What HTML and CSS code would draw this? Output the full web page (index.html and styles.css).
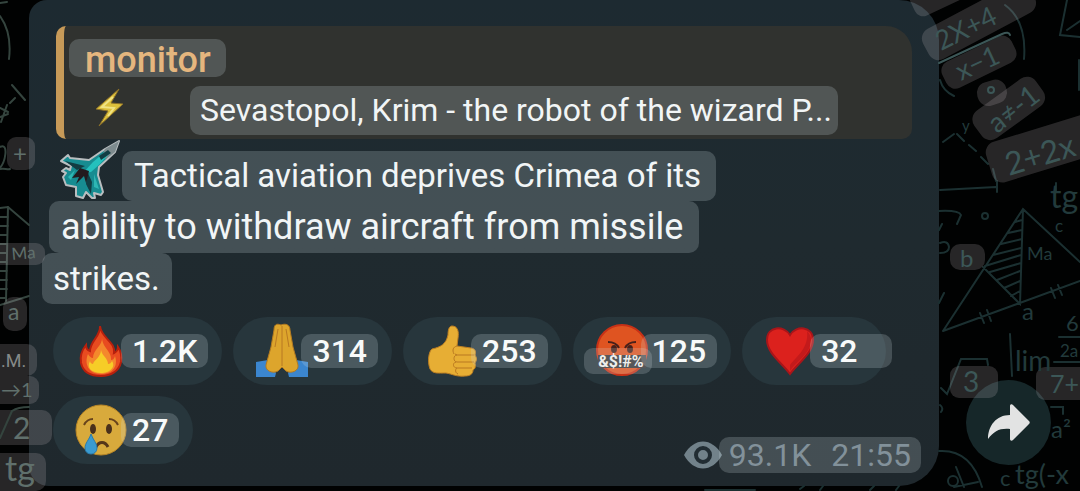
FILE: index.html
```html
<!DOCTYPE html>
<html lang="en">
<head>
<meta charset="utf-8">
<title>monitor</title>
<link rel="stylesheet" href="styles.css">
</head>
<body>
<main class="chat">
  <article class="message">
    <blockquote class="quote">
      <div class="quote-author"><span class="chip">monitor</span></div>
      <div class="quote-line">
        <svg class="bolt" viewBox="0 0 36 42" aria-hidden="true"><path d="M27 3 4 23l12 2L7 40l24-22-12-1z" fill="#dcc03c" stroke="#8a6f2a" stroke-width="1" stroke-linejoin="round"/><path d="M21 11 10 21l12 1-6 8" fill="none" stroke="#f0e384" stroke-width="2"/></svg>
        <span class="chip quote-text">Sevastopol, Krim - the robot of the wizard P...</span>
      </div>
    </blockquote>
    <div class="body">
      <div class="line line-first">
        <svg class="jet" viewBox="0 0 64 62" aria-hidden="true">
          <path d="M61 2 57 13 41 28 40 36 45 53 43 56 36 54 37 59 34 59 28 53 25 59 18 57 18 48 8 46 5 38 8 34 4 32 8 29 12 31 13 27 3 22 10 16 12 19 31 21 47 10z" fill="#178c91" stroke="#b9bec0" stroke-width="2" stroke-linejoin="round"/>
          <path d="M61 2 57 13 48 20 44 17 47 10z" fill="#7e8b8e"/>
          <path d="M47 13 35 23 25 34 33 33 42 25 52 14z" fill="#24c0bd"/>
          <path d="M50 11 41 17 43 21 53 14zM7 22l20 5-8 4zM29 32l5 11-1 12-5-10z" fill="#123d43"/>
          <path d="M22 29 14 39l7-1-3 7 8-8 2 7 3-12z" fill="#231a1e"/>
          <path d="M36 35l5 15-5-2zM10 38l7-7-4 10z" fill="#2eb7b4"/>
        </svg>
        <span class="chip">Tactical aviation deprives Crimea of its</span>
      </div>
      <div class="line"><span class="chip line-second">ability to withdraw aircraft from missile</span></div>
      <div class="line"><span class="chip line-third">strikes.</span></div>
    </div>
    <div class="reactions">
      <button class="reaction" type="button" aria-label="Fire 1.2K">
        <svg class="emoji" viewBox="0 0 52 52" aria-hidden="true"><path d="M24 1c1 10-10 15-10 25-3-1-4-3-4-6-4 5-6 12-5 18 2 9 10 13 20 13s18-5 20-14c1-6-1-12-3-15 0 3-2 5-4 6C40 17 25 13 24 1z" fill="#e84b20" stroke="#b7200d" stroke-width="2"/><path d="M26 12c1 9-9 12-9 21-2 0-4-2-5-4-4 9 0 20 13 20s17-9 14-18c-1 3-2 4-4 4 1-9-9-12-9-23z" fill="#f4882c"/><path d="M25 25c0 7-7 10-8 14-1 0-3-1-3-3-4 7 2 12 11 12s15-6 11-12c-1 2-2 3-4 3 0-6-6-8-7-14z" fill="#f6cd27"/></svg>
        <span class="chip count">1.2K</span></button>
      <button class="reaction" type="button" aria-label="Folded hands 314">
        <svg class="emoji" viewBox="0 0 52 52" aria-hidden="true"><path d="M0 37 12 35l8 13-1 4H0zM52 37 40 35l-8 13 1 4h19z" fill="#3b86cf"/><path d="M25 0c-5-2-7 0-7 5l-3 17-5 18c-1 6 7 9 12 6l4-4 4 4c5 3 13 0 12-6l-5-18-3-17c0-5-4-7-9-5z" fill="#dda52c" stroke="#b37a20" stroke-width="1"/><path d="M26 1v40M22 4l-3 18M30 4l3 18" fill="none" stroke="#b87922" stroke-width="1"/></svg>
        <span class="chip count">314</span></button>
      <button class="reaction" type="button" aria-label="Thumbs up 253">
        <svg class="emoji" viewBox="0 0 52 52" aria-hidden="true"><path d="M22 10c0-5 1-9 4-9 6 0 7 6 6 12l-1 8 14 2c5 1 5 4 4 7 2 3 2 5 0 8 1 4 0 6-2 7 0 4-3 6-8 6-8 1-13-2-19-3-8 0-13 1-16-4-3-8-1-18 2-20 9-2 14-5 16-14z" fill="#e7ae34" stroke="#bc7e22"/><path d="M31 21c-4 1-5 4-3 8M48 30H31c-4 0-4 7 0 7h17M30 37c-4 1-3 6 1 6h15M31 43c-2 1-2 5 1 6M29 29l2 1" fill="none" stroke="#b97820" stroke-width="1"/></svg>
        <span class="chip count">253</span></button>
      <button class="reaction" type="button" aria-label="Cursing face 125">
        <svg class="emoji" viewBox="0 0 52 52" aria-hidden="true"><circle cx="26" cy="25" r="25" fill="#df5421" stroke="#c83116" stroke-width="2"/><path d="M12 17c6 0 9 2 11 6M40 17c-6 0-9 2-11 6" fill="none" stroke="#47201a" stroke-width="2"/><ellipse cx="18" cy="24" rx="3" ry="4" fill="#47201a"/><ellipse cx="34" cy="24" rx="3" ry="4" fill="#47201a"/><path d="M2 30h48v13H2z" fill="#383536"/><rect x="-12" y="23" width="68" height="26" rx="9" fill="#d8e2e4" fill-opacity=".2"/><text class="curse" x="25" y="42" text-anchor="middle">&amp;$!#%</text></svg>
        <span class="chip count">125</span></button>
      <button class="reaction" type="button" aria-label="Heart 32">
        <svg class="emoji" viewBox="0 0 52 52" aria-hidden="true"><path d="M25 49C17 38 2 28 2 15 2 1 19 0 25 10 31 0 48 1 48 15c0 13-15 23-23 34z" fill="#dc211d" stroke="#a91519" stroke-width="2"/><path d="M25 46c7-10 21-18 21-31 0-4-2-7-4-9 2 17-10 25-17 34z" fill="#c31a1b"/></svg>
        <span class="chip count count-wide">32</span></button>
      <button class="reaction" type="button" aria-label="Crying face 27">
        <svg class="emoji" viewBox="0 0 52 52" aria-hidden="true"><circle cx="25" cy="26" r="25" fill="#d8aa3c" stroke="#b98625"/><path d="M8 21c2-4 5-6 9-6M33 15c4 0 7 2 9 6" fill="none" stroke="#68441c" stroke-width="2"/><ellipse cx="17" cy="25" rx="3" ry="5" fill="#49301b"/><ellipse cx="33" cy="25" rx="3" ry="5" fill="#49301b"/><path d="M20 43c3-6 9-6 12 0" fill="none" stroke="#563719" stroke-width="3"/><path d="M15 30c-2 6-6 9-6 14 0 8 12 8 12 0 0-5-4-8-6-14z" fill="#3a9bd0" stroke="#2c7ba9"/></svg>
        <span class="chip count">27</span></button>
    </div>
    <footer class="meta">
      <svg class="eye" viewBox="0 0 38 28" aria-hidden="true"><path d="M0 14C10-4 28-4 38 14 28 32 10 32 0 14z" fill="#72828a"/><circle cx="19" cy="14" r="7" fill="none" stroke="#222d33" stroke-width="4"/></svg>
      <span class="chip meta-text"><span>93.1K</span><time>21:55</time></span>
    </footer>
  </article>
  <aside class="side">
    <button class="share" type="button" aria-label="Share"><svg viewBox="0 0 44 38" aria-hidden="true"><path d="M23 2v9C9 11 1 22 1 35c6-8 12-11 22-10v10c0 2 2 2 3 1l16-16c1-1 1-2 0-3L26 1c-1-1-3-1-3 1z" fill="#e2e3e3"/></svg></button>
  </aside>

  <svg class="doodles doodles-left" viewBox="0 0 60 491" aria-hidden="true">
    <g class="ink ink-left">
      <path d="M0 16c8 11 11 26 9 43M0 3l7-1M12 85l13 15M10 103l5-5M0 108l8 4M1 122l6-17M0 117l8-3M0 147c9-5 6 16-2 23 4-3 9 0 12-1M0 208l8-1 21 18M8 207l-2 94M0 305l29-9M0 217h8M0 226h8M0 235h7M0 244h7M0 253h7M0 262h7M0 271h7M0 280h7M0 289h7M0 298h6"/>
    </g>
    <g class="patch">
      <rect x="7" y="137" width="28" height="33" rx="9"/><rect x="-10" y="243" width="55" height="22" rx="9"/><rect x="3" y="297" width="24" height="34" rx="10"/><rect x="-10" y="344" width="47" height="32" rx="10"/><rect x="-10" y="376" width="49" height="28" rx="9"/><rect x="-10" y="410" width="62" height="35" rx="10"/><rect x="-10" y="453" width="56" height="38" rx="10"/>
    </g>
    <g class="hand hand-left">
      <text x="13" y="162" font-size="24">+</text><text x="12" y="260" font-size="17" transform="rotate(-5 12 260)">Ma</text><text x="8" y="320" font-size="23">a</text><text class="plain" x="1" y="367" font-size="18">.M.</text><text x="1" y="397" font-size="20">→1</text><text x="13" y="439" font-size="30">2</text><text x="5" y="481" font-size="34">tg</text>
    </g>
    <path class="ink ink-left" d="M0 438 12 411q6-4 17-4"/>
  </svg>
  <svg class="doodles doodles-right" viewBox="920 0 160 491" aria-hidden="true">
    <g class="ink">
      <path d="M1005 5q22 16 19 54M940 80q3 11 14 16M1067 0l-7 35 20 2M1067 30l13-9M1079 60v30M943 142l11-8M957 134l7 7M969 145l7 6M981 157l7 7M993 169l3 12M940 190l56-3M997 181v11M1056 183v8M939 211q20-1 22 4l-4 9M939 230l3-6M940 243q8-3 9 4 0 6-9 6M939 303l5-10M943 331l80-122 57 53M1023 209l-3 95-37-37M943 331l137-50M1015 222l7-2M1008 233l14-3M1001 244l21-5M993 255l28-7M985 266l36-11M990 272l31-9M997 280l23-9M1004 288l16-7M1011 296l9-5M980 313l4 10M987 310l4 11M1051 288l4 10M1058 285l4 10M1010 334l2 42M1059 337h21M1054 362h26M941 388l6 6 14-35h26l1 6M1051 407h12v7M939 451q32-2 43 36M956 467l8 20M978 482l-24 5M940 405q4 3 1 7"/>
      <path d="M705 490h50M800 489l4-3M820 490l3-4M870 490l4-4M896 490l3-4"/>
      <circle cx="985" cy="216" r="3"/><circle cx="953" cy="481" r="5"/>
    </g>
    <g class="patch">
      <rect width="58" height="30" rx="9" transform="translate(906 -8) rotate(-25)"/>
      <rect width="120" height="34" rx="11" transform="translate(918 34) rotate(-28)"/>
      <rect width="77" height="29" rx="10" transform="translate(938 66) rotate(-26)"/>
      <rect width="30" height="24" rx="11" transform="translate(974 86) rotate(-18)"/>
      <rect width="76" height="34" rx="11" transform="translate(968 117) rotate(-36)"/>
      <rect width="115" height="42" rx="11" transform="translate(983 145) rotate(-17)"/>
      <rect x="950" y="244" width="35" height="26" rx="10"/><rect x="950" y="366" width="48" height="32" rx="9"/><rect x="1036" y="367" width="60" height="33" rx="9"/>
    </g>
    <g class="hand">
      <text font-size="27" transform="translate(941 51) rotate(-26)">2X+4</text><text font-size="27" transform="translate(961 81) rotate(-25)">x−1</text><text font-size="28" transform="translate(997 134) rotate(-38)">a≠-1</text><text font-size="32" transform="translate(1009 176) rotate(-17)">2+2x</text>
      <text x="960" y="267" font-size="24">b</text><text x="963" y="392" font-size="28">3</text><text x="1050" y="393" font-size="25">7+</text>
    </g>
    <g class="hand hand-faint">
      <text x="1050" y="208" font-size="32">tg</text><text x="1055" y="232" font-size="17">c</text><text x="1027" y="260" font-size="18">Ma</text><text x="1022" y="320" font-size="24">a</text><text x="1015" y="371" font-size="28">lim</text><text x="1066" y="331" font-size="22">6</text><text x="1060" y="357" font-size="17">2a</text><text x="1051" y="438" font-size="24">a²</text><text x="1000" y="486" font-size="22">c</text><text x="1015" y="484" font-size="27">tg(-x</text><text x="962" y="131" font-size="15">y</text>
    </g>
    <circle class="ink ink-dot" cx="991" cy="90" r="3"/><path class="ink ink-dot" d="M939 63l63-29q7-3 8 1"/>
  </svg>
</main>
</body>
</html>
```

FILE: styles.css
```css
* { box-sizing: border-box; }

body {
  margin: 0;
  background: #010202;
  color: #f1f5f6;
  font-family: Roboto, "Liberation Sans", sans-serif;
}

.chat {
  position: relative;
  display: flex;
  min-height: 100vh;
  padding-left: 29px;
  overflow: hidden;
}

.message {
  flex: 1;
  align-self: flex-start;
  padding: 26px 18px 13px 13px;
  border-radius: 18px 40px 40px 20px;
  background: linear-gradient(#1d2a31, #1f2a2f 50%, #1f282d);
}

.chip {
  display: inline-block;
  border-radius: 10px;
  background: rgba(210, 220, 225, 0.21);
  white-space: nowrap;
}

.quote {
  margin: 0 9px 0 14px;
  padding: 13px 0 4px 5px;
  border-left: 8px solid #c79a58;
  border-radius: 10px 26px 10px 10px;
  background: #30322f;
}

.quote-author { height: 38px; }

.quote-author .chip {
  padding: 4px 15px 0 16px;
  color: #e5b67e;
  font-size: 36px;
  font-weight: 500;
  line-height: 34px;
  vertical-align: top;
}

.quote-line {
  display: flex;
  align-items: flex-start;
  gap: 62px;
  margin-top: 9px;
  padding-left: 23px;
}

.bolt { width: 36px; height: 42px; }

.quote-text {
  padding: 0 6px 0 10px;
  font-size: 32px;
  line-height: 49px;
}

.body { padding-top: 12px; }

.line { display: flex; }

.line-first {
  align-items: flex-end;
  padding-left: 16px;
  height: 50px;
}

.line-first .chip {
  padding: 0 15px 0 12px;
  font-size: 33px;
  line-height: 50px;
}

.jet {
  width: 64px;
  height: 62px;
  flex: none;
}

.line-second {
  margin-left: 7px;
  padding: 0 16px 0 12px;
  font-size: 36px;
  line-height: 52px;
}

.line-third {
  padding: 0 12px 0 11px;
  font-size: 33px;
  line-height: 51px;
}

.reactions {
  display: flex;
  flex-wrap: wrap;
  gap: 11px;
  margin-top: 13px;
  padding-left: 11px;
}

.reaction {
  display: flex;
  align-items: center;
  height: 68px;
  padding: 0 14px 0 23px;
  border: 0;
  border-radius: 34px;
  background: #27363c;
  color: #f8fafa;
  font-family: Roboto, "Liberation Sans", sans-serif;
  font-size: 32px;
  font-weight: 500;
}

.emoji {
  width: 52px;
  height: 52px;
  flex: none;
  overflow: visible;
}

.curse {
  fill: #eeeeec;
  font-size: 16px;
  font-weight: 700;
}

.count {
  margin-left: -7px;
  padding: 0 11px;
  line-height: 34px;
}

.count-wide {
  margin-right: -20px;
  padding-right: 34px;
}

.meta {
  display: flex;
  align-items: center;
  justify-content: flex-end;
  margin-top: -27px;
}

.eye { width: 38px; height: 28px; margin-right: -3px; }

.meta-text {
  display: flex;
  gap: 20px;
  padding: 0 10px;
  color: #82919a;
  font-size: 32px;
  line-height: 36px;
}

.side {
  flex: 0 0 141px;
  display: flex;
  align-items: flex-end;
  padding: 0 0 26px 27px;
}

.share {
  display: grid;
  place-items: center;
  width: 85px;
  height: 85px;
  padding: 0;
  border: 0;
  border-radius: 50%;
  background: #162729;
}

.share svg { width: 44px; height: 38px; }

.doodles {
  position: absolute;
  top: 0;
  height: 491px;
  overflow: visible;
  pointer-events: none;
}

.doodles-left { left: 0; width: 60px; }
.doodles-right { right: 0; width: 160px; }

.ink {
  fill: none;
  stroke: #1b3031;
  stroke-width: 2;
  stroke-linecap: round;
}

.ink-left { stroke: #34443e; }
.ink-dot { stroke: #3c5757; }
.patch { fill: rgba(205, 195, 200, 0.19); }

.hand {
  fill: #3c5757;
  font-family: Lato, "Open Sans", sans-serif;
}

.hand-left { fill: #60706c; }
.hand-faint { fill: #223a3b; }
.plain { fill: #858988; font-family: Roboto, sans-serif; }
```
